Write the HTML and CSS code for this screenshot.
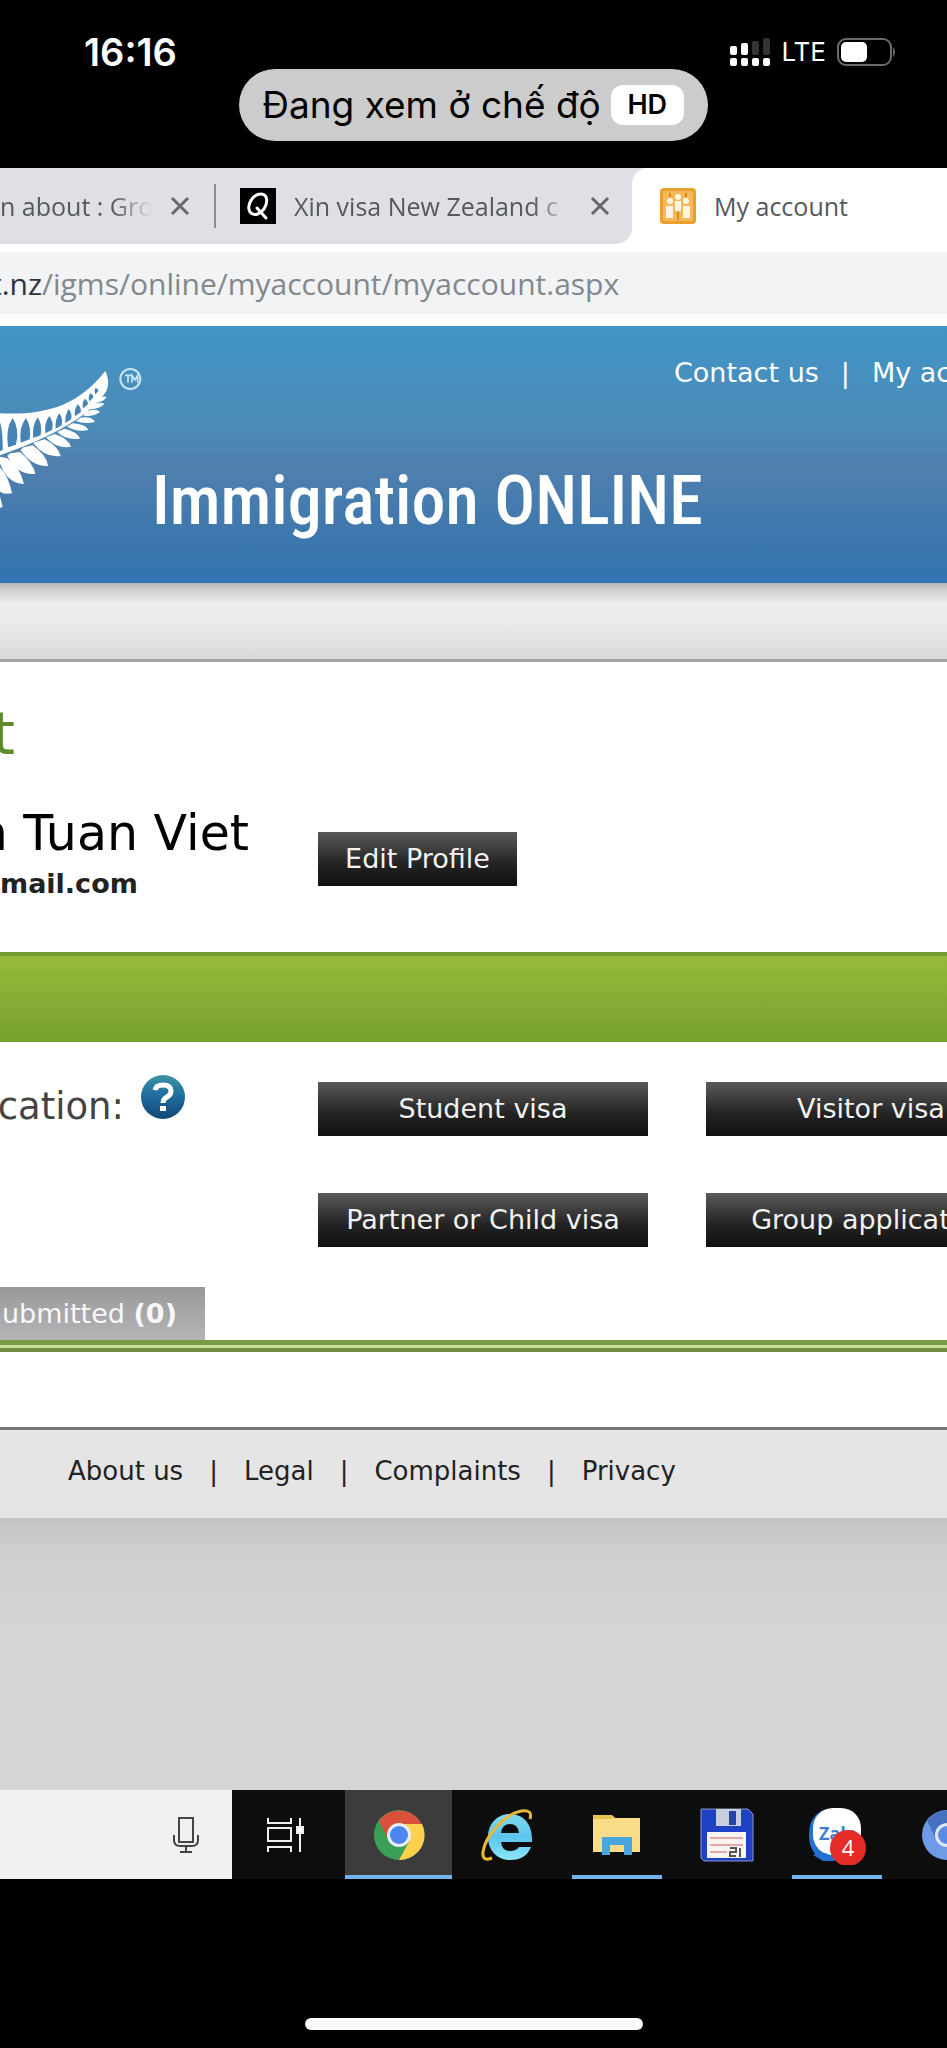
FILE: index.html
```html
<!DOCTYPE html>
<html lang="vi">
<head>
    <meta charset="UTF-8">
    <meta name="viewport" content="width=device-width, initial-scale=1.0">
    <title>My account</title>
    <link rel="stylesheet" href="styles.css">
</head>
<body>
    <div class="status">
        <div class="status-row">
            <span class="clock">16:16</span>
            <div class="signals">
                <svg width="40" height="28" viewBox="0 0 40 28">
                    <g fill="#fff">
                        <rect x="0" y="8" width="7" height="9" rx="2"/>
                        <rect x="11" y="5" width="7" height="12" rx="2"/>
                        <rect x="0" y="20" width="7" height="8" rx="2"/>
                        <rect x="11" y="20" width="7" height="8" rx="2"/>
                        <rect x="22" y="20" width="7" height="8" rx="2"/>
                        <rect x="33" y="20" width="7" height="8" rx="2"/>
                    </g>
                    <g fill="#333">
                        <rect x="22" y="3" width="7" height="14" rx="2"/>
                        <rect x="33" y="0" width="7" height="17" rx="2"/>
                    </g>
                </svg>
                <span class="lte">LTE</span>
                <svg width="60" height="28" viewBox="0 0 60 28">
                    <rect x="1" y="1" width="53" height="26" rx="8" fill="none" stroke="#6b6b6b" stroke-width="2"/>
                    <rect x="4" y="4" width="26" height="20" rx="5" fill="#fff"/>
                    <path d="M56 9q4 5 0 10z" fill="#6b6b6b"/>
                </svg>
            </div>
        </div>
        <div class="pill">Đang xem ở chế độ <span class="hd">HD</span></div>
    </div>

    <div class="tabs">
        <div class="tab tab-first">
            <span class="tab-name fade">n about : Gro</span>
            <button class="close" aria-label="Close tab"><svg width="20" height="20" viewBox="0 0 20 20"><path d="M2 2l16 16M18 2L2 18" stroke="#66686c" stroke-width="3"/></svg></button>
        </div>
        <div class="tab tab-second">
            <svg class="favicon" width="36" height="36" viewBox="0 0 36 36">
                <rect width="36" height="36" fill="#000"/>
                <path d="M10 24C6 17 13 6 21 6c7 0 7 9 3 15-4 5-10 8-14 3zM17 20l9 10" fill="none" stroke="#fff" stroke-width="3" stroke-linecap="round"/>
            </svg>
            <span class="tab-name fade">Xin visa New Zealand c</span>
            <button class="close" aria-label="Close tab"><svg width="20" height="20" viewBox="0 0 20 20"><path d="M2 2l16 16M18 2L2 18" stroke="#66686c" stroke-width="3"/></svg></button>
        </div>
        <div class="tab tab-active">
            <svg class="favicon" width="36" height="36" viewBox="0 0 36 36">
                <rect width="36" height="36" rx="4" fill="#ea9f2d"/>
                <rect x="3" y="3" width="30" height="30" rx="2" fill="#f3b95a"/>
                <g fill="#fff5e0">
                    <circle cx="10" cy="13" r="3"/><circle cx="26" cy="13" r="3"/><circle cx="18" cy="9" r="3"/>
                    <path d="M6 18h7v12H6zM23 18h7v12h-7zM15 13h6v10h-6z"/>
                </g>
                <path d="M10 5v4M26 5v4M18 24v8" stroke="#d98a1c" stroke-width="2"/>
            </svg>
            <span class="tab-name">My account</span>
        </div>
    </div>
    <div class="address"><span class="host">t.nz</span>/igms/online/myaccount/myaccount.aspx</div>

    <header class="header">
        <svg class="fern" width="144" height="144" viewBox="0 141 432 432">
            <path fill="#fff" d="M0 280C130 286 230 262 316 153C328 180 326 200 318 215C270 285 170 345 0 406z"/>
            <g fill="#4783b4">
                <path d="M0 306q9 30 8 84l-8 4z"/>
                <path d="M38 294q-22 30-14 88l24-8q12-45-10-80z"/>
                <path d="M78 294q-22 28-16 74l27-10q6-36-11-64z"/>
                <path d="M113 292q-18 26-13 62l22-8q6-32-9-54z"/>
                <path d="M148 288q-16 20-12 52l20-10q6-24-8-42z"/>
                <path d="M178 280q-14 20-11 46l18-10q4-22-7-36z"/>
                <path d="M206 267q-12 20-10 42l17-11q5-17-7-31z"/>
                <path d="M233 253q-12 18-8 36l17-12q3-14-9-24z"/>
                <path d="M254 236q-9 13-5 29l14-11q3-10-9-18z"/>
                <path d="M271 220q-8 12-3 24l11-10q3-8-8-14z"/>
                <path d="M286 204q-5 10 0 19l9-9q1-7-9-10z"/>
            </g>
            <g fill="#fff">
                <path d="M0 530l8 30-8 4z"/>
                <path d="M-30 425Q20 440 36 520Q-10 530-30 470z"/>
                <path d="M0 410L20 414Q60 440 72 492Q20 490 0 430z"/>
                <path d="M30 400L60 396Q100 430 106 462Q50 465 22 408z"/>
                <path d="M70 382L98 376Q140 405 144 438Q95 440 62 390z"/>
                <path d="M106 366L134 358Q174 378 182 408Q135 415 100 370z"/>
                <path d="M142 350L164 342Q205 356 213 380Q170 388 138 352z"/>
                <path d="M176 334L194 326Q232 335 240 356Q198 362 172 336z"/>
                <path d="M204 318L218 310Q256 312 266 330Q228 338 200 319z"/>
                <path d="M230 301L242 293Q276 288 285 306Q252 314 226 302z"/>
                <path d="M250 285L260 274Q290 264 300 276Q278 292 247 286z"/>
                <path d="M268 266L278 254Q304 244 313 252Q296 270 264 267z"/>
                <path d="M284 246L294 236Q312 226 320 232Q306 250 281 248z"/>
            </g>
            <g fill="none" stroke="#c5e6f3">
                <circle cx="391" cy="177" r="30" stroke-width="6"/>
                <path d="M375 166h18M384 166v22M396 188v-22l9 14 8-14v22" stroke-width="5"/>
            </g>
        </svg>
        <div class="header-main">
            <nav class="links top-links">
                <a href="#">Contact us</a><span>|</span><a href="#">My account</a>
            </nav>
            <h1 class="site-name">Immigration ONLINE</h1>
        </div>
    </header>
    <div class="under-header"></div>

    <main class="content">
        <h2 class="page-title">t</h2>
        <div class="grid profile">
            <div class="person">
                <p class="name">n Tuan Viet</p>
                <p class="email">mail.com</p>
            </div>
            <button class="btn">Edit Profile</button>
        </div>
        <div class="green-bar"></div>
        <div class="grid apply">
            <div class="apply-label">
                <span>cation:</span>
                <svg width="46" height="46" viewBox="0 0 46 46">
                    <defs>
                        <linearGradient id="help" x1="0" y1="0" x2="0" y2="1">
                            <stop offset="0" stop-color="#3a93a6"/>
                            <stop offset=".5" stop-color="#1f6a9c"/>
                            <stop offset="1" stop-color="#134872"/>
                        </linearGradient>
                    </defs>
                    <circle cx="23" cy="23" r="22" fill="url(#help)"/>
                    <path d="M15 16q1-5 8-5 8 0 8 6 0 4-4 6-4 2-4 6" fill="none" stroke="#fff" stroke-width="5"/>
                    <rect x="20" y="32" width="6" height="5" fill="#fff"/>
                </svg>
            </div>
            <div class="visas">
                <button class="btn">Student visa</button>
                <button class="btn">Visitor visa</button>
                <button class="btn">Partner or Child visa</button>
                <button class="btn">Group application</button>
            </div>
        </div>
        <button class="submitted">ubmitted <b>(0)</b></button>
        <div class="rule"></div>
    </main>

    <footer class="footer">
        <nav class="links">
            <a href="#">About us</a><span>|</span><a href="#">Legal</a><span>|</span><a href="#">Complaints</a><span>|</span><a href="#">Privacy</a>
        </nav>
    </footer>
    <div class="backdrop"></div>

    <div class="taskbar">
        <div class="search">
            <svg width="26" height="38" viewBox="0 0 26 38" fill="none" stroke="#444" stroke-width="2">
                <rect x="6" y="2" width="14" height="24"/>
                <path d="M1 19v5q0 6 6 6h12q6 0 6-6v-5M13 30v5M7 36h12"/>
            </svg>
        </div>
        <div class="task task-view">
            <svg width="38" height="36" viewBox="0 0 38 36" fill="none" stroke="#eee" stroke-width="2">
                <path d="M2 1v5h23V1M2 35v-5h23v5M34 1v34"/>
                <rect x="2" y="11" width="23" height="13"/>
                <rect x="31" y="10" width="6" height="6" fill="#fff"/>
            </svg>
        </div>
        <div class="task chrome">
            <svg width="52" height="52" viewBox="0 0 52 52">
                <circle cx="26" cy="26" r="25" fill="#3c9f58"/>
                <path d="M6 12A25 25 0 0 1 49 16H26L16 32z" fill="#db4f3d"/>
                <path d="M26 15h23A25 25 0 0 1 26 51l11-20z" fill="#fdd04e"/>
                <circle cx="26" cy="26" r="12" fill="#e8eef8"/>
                <circle cx="26" cy="26" r="9" fill="#4c86ee"/>
            </svg>
        </div>
        <div class="task">
            <svg width="52" height="52" viewBox="0 0 52 52">
                <defs>
                    <linearGradient id="ie" x1="0" y1="0" x2="0" y2="1">
                        <stop offset="0" stop-color="#7fdcf2"/>
                        <stop offset=".5" stop-color="#5cc3ec"/>
                        <stop offset="1" stop-color="#8be8fa"/>
                    </linearGradient>
                </defs>
                <path d="M51 33H20q1 9 9 9 6 0 9-4h12q-5 13-21 13C16 51 7 41 7 28S16 5 29 5s23 10 22 28zM20 24h18q-1-9-9-9t-9 9z" fill="url(#ie)" fill-rule="evenodd"/>
                <path d="M11 49Q1 53 2 43C4 27 24 5 40 2q12-2 9 8" fill="none" stroke="#e6b93b" stroke-width="3"/>
            </svg>
        </div>
        <div class="task running">
            <svg width="50" height="44" viewBox="0 0 50 44">
                <path d="M1 2h19l3 3h25v34H1z" fill="#f8dc87"/>
                <path d="M1 2h19v4H1z" fill="#e9bf4d"/>
                <path d="M10 24h30v18h-8V32H18v10h-8z" fill="#49a5de"/>
            </svg>
        </div>
        <div class="task">
            <svg width="54" height="54" viewBox="0 0 54 54">
                <path d="M1 1h47l5 5v47H4l-3-3z" fill="#1f42c4" stroke="#8797ca"/>
                <path d="M16 1h25v17H16z" fill="#c9cde0"/>
                <path d="M29 3h7v14h-7z" fill="#2445a8"/>
                <path d="M7 24h39v26H7z" fill="#f8f4f4"/>
                <path d="M10 30h33M10 37h33M10 44h17" stroke="#e5a9a5" stroke-width="2"/>
                <path d="M30 40h6v4h-6v4h6M40 40v9" stroke="#555" stroke-width="2" fill="none"/>
            </svg>
        </div>
        <div class="task running zalo">
            <svg width="60" height="60" viewBox="0 0 60 60">
                <path d="M24 4C8 5 2 16 2 30c0 10 4 22 16 24l14 1z" fill="#2272d4"/>
                <rect x="6" y="3" width="48" height="47" rx="20" fill="#fff"/>
                <path d="M6 50q10-5 18 1l4 5H16z" fill="#2272d4"/>
                <text class="zalo-text" x="12" y="35">Zalo</text>
                <circle cx="41" cy="43" r="18" fill="#e32b27"/>
                <text class="zalo-count" x="41" y="51" text-anchor="middle">4</text>
            </svg>
        </div>
        <div class="task">
            <svg width="52" height="52" viewBox="0 0 52 52">
                <circle cx="26" cy="26" r="25" fill="#6f9ae8"/>
                <path d="M6 12A25 25 0 0 1 49 16H26L16 32z" fill="#4671bf"/>
                <circle cx="26" cy="26" r="12" fill="#dce7fa"/>
                <circle cx="26" cy="26" r="9" fill="#5a8be6"/>
            </svg>
        </div>
    </div>
    <div class="home"><div class="home-bar"></div></div>
</body>
</html>
```
FILE: styles.css
```css
* {
    box-sizing: border-box;
}
body {
    margin: 0;
    min-height: 100vh;
    display: flex;
    flex-direction: column;
    background: #000;
    overflow-x: hidden;
    font-family: "DejaVu Sans", Verdana, sans-serif;
    font-size: 27px;
    line-height: 32px;
    color: #222;
}
h1, h2, p {
    margin: 0;
    font-weight: normal;
}
svg {
    display: block;
    flex: none;
}
a {
    color: inherit;
    text-decoration: none;
}
button {
    padding: 0;
    border: none;
    background: none;
    font: inherit;
    cursor: pointer;
}

/* phone status bar */
.status {
    height: 168px;
    color: #fff;
    font-family: Inter, sans-serif;
    display: flex;
    flex-direction: column;
    align-items: center;
}
.status-row {
    width: 100%;
    height: 69px;
    padding: 35px 50px 0 84px;
    display: flex;
    justify-content: space-between;
    align-items: center;
}
.clock {
    font-size: 38px;
    font-weight: 600;
}
.signals {
    display: flex;
    align-items: center;
    gap: 11px;
}
.lte {
    font-size: 26px;
}
.pill {
    height: 72px;
    padding: 0 24px 0 23px;
    display: flex;
    align-items: center;
    gap: 10px;
    border-radius: 36px;
    background: #ccc;
    color: #000;
    font-size: 37px;
    white-space: nowrap;
}
.hd {
    width: 73px;
    border-radius: 12px;
    background: #fff;
    font-size: 27px;
    font-weight: 600;
    line-height: 40px;
    text-align: center;
}

/* browser tabs, the strip shows white below the rounded corner of the inactive one */
.tabs {
    height: 76px;
    display: flex;
    background: linear-gradient(#dee0e5 50%, #fff 50%);
    font-family: "Open Sans", sans-serif;
    font-size: 25px;
    color: #55585d;
    white-space: nowrap;
}
.tab {
    display: flex;
    align-items: center;
    gap: 18px;
}
.tab-first {
    flex: 0 0 216px;
    background: #dee0e5 linear-gradient(#8b8d92, #8b8d92) right center / 2px 44px no-repeat;
}
.tab-first .tab-name {
    width: 152px;
}
.tab-second {
    flex: 0 0 416px;
    padding-left: 24px;
    background: #dee0e5;
    border-radius: 0 0 16px 0;
}
.tab-second .tab-name {
    width: 278px;
}
.tab-active {
    flex: 1;
    padding-left: 28px;
    background: #fff;
    border-radius: 16px 0 0 0;
}
.fade {
    overflow: hidden;
    -webkit-mask-image: linear-gradient(to left, transparent, #000 40px);
    mask-image: linear-gradient(to left, transparent, #000 40px);
}
.address {
    height: 82px;
    padding-top: 8px;
    border-top: 8px solid #fff;
    border-bottom: 12px solid #fdfdfd;
    background: #f1f3f5;
    font-family: "Open Sans", sans-serif;
    font-size: 30px;
    line-height: 48px;
    color: #84878b;
    white-space: nowrap;
    display: flex;
}
.host {
    width: 42px;
    display: flex;
    justify-content: flex-end;
    overflow: hidden;
    color: #303236;
}

/* site header */
.header {
    height: 257px;
    display: flex;
    background: linear-gradient(#4195c8, #4c8ab6 40%, #4f80ae 55%, #3975ae 88%, #3275b3);
    color: #fff;
}
.fern {
    margin-top: 41px;
}
.header-main {
    flex: 1;
    padding: 31px 0 0 8px;
    min-width: 0;
    overflow: hidden;
}
.links {
    display: flex;
    gap: 26px;
    white-space: nowrap;
}
.top-links {
    padding-left: 522px;
    gap: 22px;
}
.site-name {
    padding-top: 68px;
    font-family: "Roboto Condensed", "Open Sans Condensed", "Liberation Sans Narrow", "DejaVu Sans Condensed", sans-serif;
    font-size: 68px;
    font-weight: 500;
    line-height: 88px;
    white-space: nowrap;
}
.under-header {
    height: 79px;
    border-bottom: 3px solid #a5a5a5;
    background: linear-gradient(#b5b5b5, #d5d5d5 12%, #eee 28%, #eaeaea 55%, #d9d9d9);
}

/* account page */
.content {
    background: #fff;
}
.page-title {
    width: 15px;
    padding-top: 38px;
    display: flex;
    justify-content: flex-end;
    overflow: hidden;
    font-size: 58px;
    line-height: 68px;
    color: #5f8a2a;
}
.grid {
    display: grid;
    grid-template-columns: 318px 1fr;
}
.profile {
    height: 184px;
    padding-top: 36px;
}
.profile .btn {
    width: 199px;
    margin-top: 28px;
}
.person {
    white-space: nowrap;
}
.name {
    width: 249px;
    display: flex;
    justify-content: flex-end;
    overflow: hidden;
    font-size: 49px;
    line-height: 60px;
    color: #000;
}
.email {
    padding-top: 4px;
    font-weight: bold;
}
.btn {
    height: 54px;
    background: linear-gradient(#5a5a5a, #222 60%, #111);
    color: #f2f2f2;
    white-space: nowrap;
}
.green-bar {
    height: 90px;
    border-top: 4px solid #729b31;
    background: linear-gradient(#95ba3b, #78a12e);
}
.apply {
    height: 245px;
    padding-top: 40px;
}
.apply-label {
    display: flex;
    align-items: flex-start;
    height: 46px;
    gap: 16px;
    margin-top: -8px;
    font-size: 37px;
    line-height: 52px;
    color: #444;
}
.apply-label span {
    width: 124px;
    padding-top: 7px;
    display: flex;
    justify-content: flex-end;
}
.visas {
    display: grid;
    grid-template-columns: 330px 330px;
    grid-auto-rows: 54px;
    gap: 57px 58px;
    overflow: hidden;
}
.submitted {
    display: block;
    width: 205px;
    height: 53px;
    padding-right: 28px;
    background: linear-gradient(#999, #b5b5b8);
    color: #f8f8f8;
    text-align: right;
    white-space: nowrap;
}
.rule {
    height: 12px;
    border-top: 5px solid #7d9a48;
    border-bottom: 4px solid #708b43;
    background: #c9de95;
    margin-bottom: 75px;
}

.footer {
    height: 91px;
    padding: 25px 0 0 68px;
    border-top: 3px solid #777;
    background: #e5e5e5;
    font-size: 26px;
}
.backdrop {
    height: 272px;
    background: linear-gradient(#c4c4c4, #cecece 30px, #d5d5d5 110px);
}

/* windows taskbar */
.taskbar {
    height: 89px;
    display: flex;
    background: #0d0d0d;
    overflow: hidden;
}
.search {
    flex: 0 0 232px;
    padding-right: 33px;
    display: flex;
    align-items: center;
    justify-content: flex-end;
    background: #f1f1f1;
}
.task {
    flex: 0 0 90px;
    margin-right: 20px;
    display: flex;
    align-items: center;
    justify-content: center;
    border-bottom: 4px solid transparent;
    border-top: 4px solid transparent;
}
.task-view {
    flex-basis: 113px;
    margin-right: 0;
    padding-right: 8px;
}
.chrome {
    flex-basis: 107px;
    margin-right: 10px;
    background: #3c3c3c;
    border-color: #3c3c3c;
    border-bottom-color: #72b5ee;
}
.running {
    border-bottom-color: #72b5ee;
}
.zalo-text {
    font: bold 18px "Open Sans", sans-serif;
    fill: #3d7fd6;
}
.zalo-count {
    font: 22px "Open Sans", sans-serif;
    fill: #fff;
}

.home {
    flex: 1;
    padding: 139px 0 18px;
}
.home-bar {
    width: 338px;
    height: 12px;
    margin: 0 auto;
    border-radius: 6px;
    background: #fbfbfb;
}
```
